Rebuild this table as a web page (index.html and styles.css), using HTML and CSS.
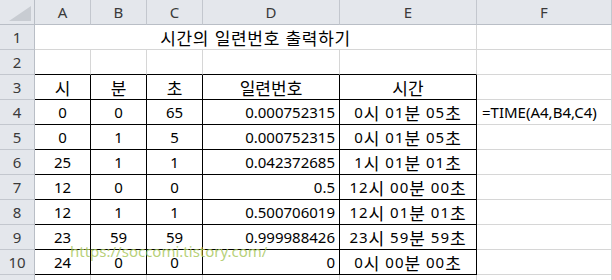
FILE: index.html
```html
<!DOCTYPE html>
<html lang="ko">
<head>
<meta charset="utf-8">
<title>시간의 일련번호 출력하기</title>
<link rel="stylesheet" href="styles.css">
</head>
<body>
<div class="sheet">
  <div class="corner"><svg width="22" height="15" viewBox="0 0 22 15"><polygon points="22,0 22,15 0,15" fill="#c8ccd2"/></svg></div>
  <div class="ch">A</div><div class="ch">B</div><div class="ch">C</div><div class="ch">D</div><div class="ch">E</div><div class="ch">F</div>

  <div class="rh">1</div>
  <div class="c title"><span class="ko">시간의 일련번호 출력하기</span></div>
  <div class="c"></div>

  <div class="rh">2</div>
  <div class="c above"></div><div class="c above"></div><div class="c above"></div><div class="c above"></div><div class="c above"></div><div class="c"></div>

  <div class="rh">3</div>
  <div class="c t ctr"><span class="ko">시</span></div><div class="c t ctr"><span class="ko">분</span></div><div class="c t ctr"><span class="ko">초</span></div><div class="c t ctr"><span class="ko">일련번호</span></div><div class="c t ctr"><span class="ko">시간</span></div><div class="c"></div>

  <div class="rh">4</div>
  <div class="c t ctr">0</div><div class="c t ctr">0</div><div class="c t ctr">65</div><div class="c t num">0.000752315</div><div class="c t ctr tm">0<span class="ko">시</span> 01<span class="ko">분</span> 05<span class="ko">초</span></div><div class="c left">=TIME(A4,B4,C4)</div>

  <div class="rh">5</div>
  <div class="c t ctr">0</div><div class="c t ctr">1</div><div class="c t ctr">5</div><div class="c t num">0.000752315</div><div class="c t ctr tm">0<span class="ko">시</span> 01<span class="ko">분</span> 05<span class="ko">초</span></div><div class="c"></div>

  <div class="rh">6</div>
  <div class="c t ctr">25</div><div class="c t ctr">1</div><div class="c t ctr">1</div><div class="c t num">0.042372685</div><div class="c t ctr tm">1<span class="ko">시</span> 01<span class="ko">분</span> 01<span class="ko">초</span></div><div class="c"></div>

  <div class="rh">7</div>
  <div class="c t ctr">12</div><div class="c t ctr">0</div><div class="c t ctr">0</div><div class="c t num">0.5</div><div class="c t ctr tm">12<span class="ko">시</span> 00<span class="ko">분</span> 00<span class="ko">초</span></div><div class="c"></div>

  <div class="rh">8</div>
  <div class="c t ctr">12</div><div class="c t ctr">1</div><div class="c t ctr">1</div><div class="c t num">0.500706019</div><div class="c t ctr tm">12<span class="ko">시</span> 01<span class="ko">분</span> 01<span class="ko">초</span></div><div class="c"></div>

  <div class="rh">9</div>
  <div class="c t ctr">23</div><div class="c t ctr">59</div><div class="c t ctr">59</div><div class="c t num">0.999988426</div><div class="c t ctr tm">23<span class="ko">시</span> 59<span class="ko">분</span> 59<span class="ko">초</span></div><div class="c"></div>

  <div class="rh">10</div>
  <div class="c t ctr">24</div><div class="c t ctr">0</div><div class="c t ctr">0</div><div class="c t num">0</div><div class="c t ctr tm">0<span class="ko">시</span> 00<span class="ko">분</span> 00<span class="ko">초</span></div><div class="c"></div>

  <div class="rh">11</div>
  <div class="c"></div><div class="c"></div><div class="c"></div><div class="c"></div><div class="c"></div><div class="c"></div>

  <div class="wm">https://soccomi.tistory.com/</div>
</div>
</body>
</html>
```
FILE: styles.css
```css
html, body {
  margin: 0;
  padding: 0;
  background: #ffffff;
  overflow: hidden;
}

.sheet {
  position: relative;
  display: grid;
  grid-template-columns: 35px 56px 56px 56px 137px 137px 135px;
  grid-auto-rows: 25px;
  width: 612px;
  height: 280px;
  overflow: hidden;
  font-family: "Noto Sans", "Noto Sans CJK KR", sans-serif;
  font-size: 15px;
  color: #000;
}

.sheet > div {
  box-sizing: border-box;
}

.ko {
  font-family: "Noto Sans CJK KR", sans-serif;
  font-size: 17px;
  line-height: 1;
}

.title .ko {
  letter-spacing: 0.7px;
  word-spacing: 0;
}

.tm {
  letter-spacing: 1px;
}

.corner {
  background: #e4e7ec;
  border-right: 1px solid #b9bec6;
  border-bottom: 1px solid #b9bec6;
  display: flex;
  align-items: flex-end;
  justify-content: flex-end;
  padding: 0 3px 3px 0;
}

.corner svg {
  display: block;
}

.ch {
  background: #e4e7ec;
  border-right: 1px solid #c3c7ce;
  border-bottom: 1px solid #b9bec6;
  display: flex;
  align-items: center;
  justify-content: center;
  color: #3a3a3a;
}

.rh {
  background: #e4e7ec;
  border-right: 1px solid #b9bec6;
  border-bottom: 1px solid #c3c7ce;
  display: flex;
  align-items: center;
  justify-content: center;
  color: #3a3a3a;
}

.c {
  border-right: 1px solid #d6d6d6;
  border-bottom: 1px solid #d6d6d6;
  display: flex;
  align-items: center;
  white-space: pre;
}

.title {
  grid-column: 2 / 7;
  justify-content: center;
}

.above {
  border-bottom-color: #000;
}

.t {
  border-right-color: #000;
  border-bottom-color: #000;
}

.ctr {
  justify-content: center;
}

.num {
  justify-content: flex-end;
  padding-right: 4px;
}

.left {
  justify-content: flex-start;
  padding-left: 5px;
}

.wm {
  position: absolute;
  left: 70px;
  top: 240px;
  font-size: 15px;
  line-height: 22px;
  color: rgba(170, 200, 95, 0.85);
  white-space: nowrap;
  pointer-events: none;
}
```
